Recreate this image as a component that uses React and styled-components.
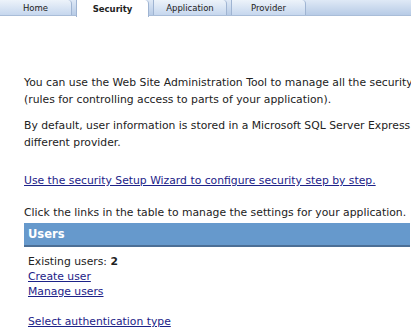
import React from 'react';
import styled, { createGlobalStyle } from 'styled-components';

const GlobalStyle = createGlobalStyle`
  body {
    margin: 0;
    background: #fff;
    font-family: "DejaVu Sans", Verdana, sans-serif;
    color: #222;
  }
`;

const TabBar = styled.div`
  display: flex;
  align-items: flex-start;
  gap: 4px;
  height: 15px;
  background: linear-gradient(#dfe9f6, #b7cbe6);
  border-bottom: 1px solid #a9bdd8;
`;

const Tab = styled.div`
  width: ${(p) => p.width}px;
  height: ${(p) => (p.active ? 17 : 15)}px;
  box-sizing: border-box;
  display: flex;
  align-items: center;
  justify-content: center;
  font-size: 8.5px;
  font-weight: ${(p) => (p.active ? 700 : 400)};
  color: #222;
  background: ${(p) => (p.active ? '#fff' : 'linear-gradient(#edf3fa, #c6d7ee)')};
  border: 1px solid #9fb4d2;
  border-top: none;
  border-bottom: none;
  border-radius: 0 4px 0 0;
  padding-top: 1px;
  &:first-child {
    border-left: none;
  }
`;

const Content = styled.div`
  padding: 58px 0 0 24px;
  font-size: 10.8px;
  line-height: 17px;
  white-space: nowrap;
  overflow: hidden;
`;

const Para = styled.p`
  margin: 0 0 9px;
`;

const Link = styled.a`
  color: #1c2288;
  text-decoration: underline;
  cursor: pointer;
`;

const LinkPara = styled.p`
  margin: 21px 0 15px;
`;

const Section = styled.div`
  margin: 2px 1px 0 0;
`;

const SectionHeader = styled.div`
  height: 22px;
  display: flex;
  align-items: center;
  padding-left: 4px;
  background: #6699cc;
  border-bottom: 2px solid #4c6f96;
  color: #fff;
  font-weight: 700;
  font-size: 11.5px;
`;

const SectionBody = styled.div`
  padding: 7px 0 0 4px;
  line-height: 15px;
`;

const Spacer = styled.div`
  height: 15px;
`;

export default function App() {
  return (
    <>
      <GlobalStyle />
      <TabBar>
        <Tab width={72}>Home</Tab>
        <Tab width={73} active>Security</Tab>
        <Tab width={74}>Application</Tab>
        <Tab width={75}>Provider</Tab>
      </TabBar>
      <Content>
        <Para>
          You can use the Web Site Administration Tool to manage all the security
          <br />
          (rules for controlling access to parts of your application).
        </Para>
        <Para>
          By default, user information is stored in a Microsoft SQL Server Express
          <br />
          different provider.
        </Para>
        <LinkPara>
          <Link>Use the security Setup Wizard to configure security step by step.</Link>
        </LinkPara>
        <div>Click the links in the table to manage the settings for your application.</div>
        <Section>
          <SectionHeader>Users</SectionHeader>
          <SectionBody>
            <div>
              Existing users: <b>2</b>
            </div>
            <div>
              <Link>Create user</Link>
            </div>
            <div>
              <Link>Manage users</Link>
            </div>
            <Spacer />
            <div>
              <Link>Select authentication type</Link>
            </div>
          </SectionBody>
        </Section>
      </Content>
    </>
  );
}
